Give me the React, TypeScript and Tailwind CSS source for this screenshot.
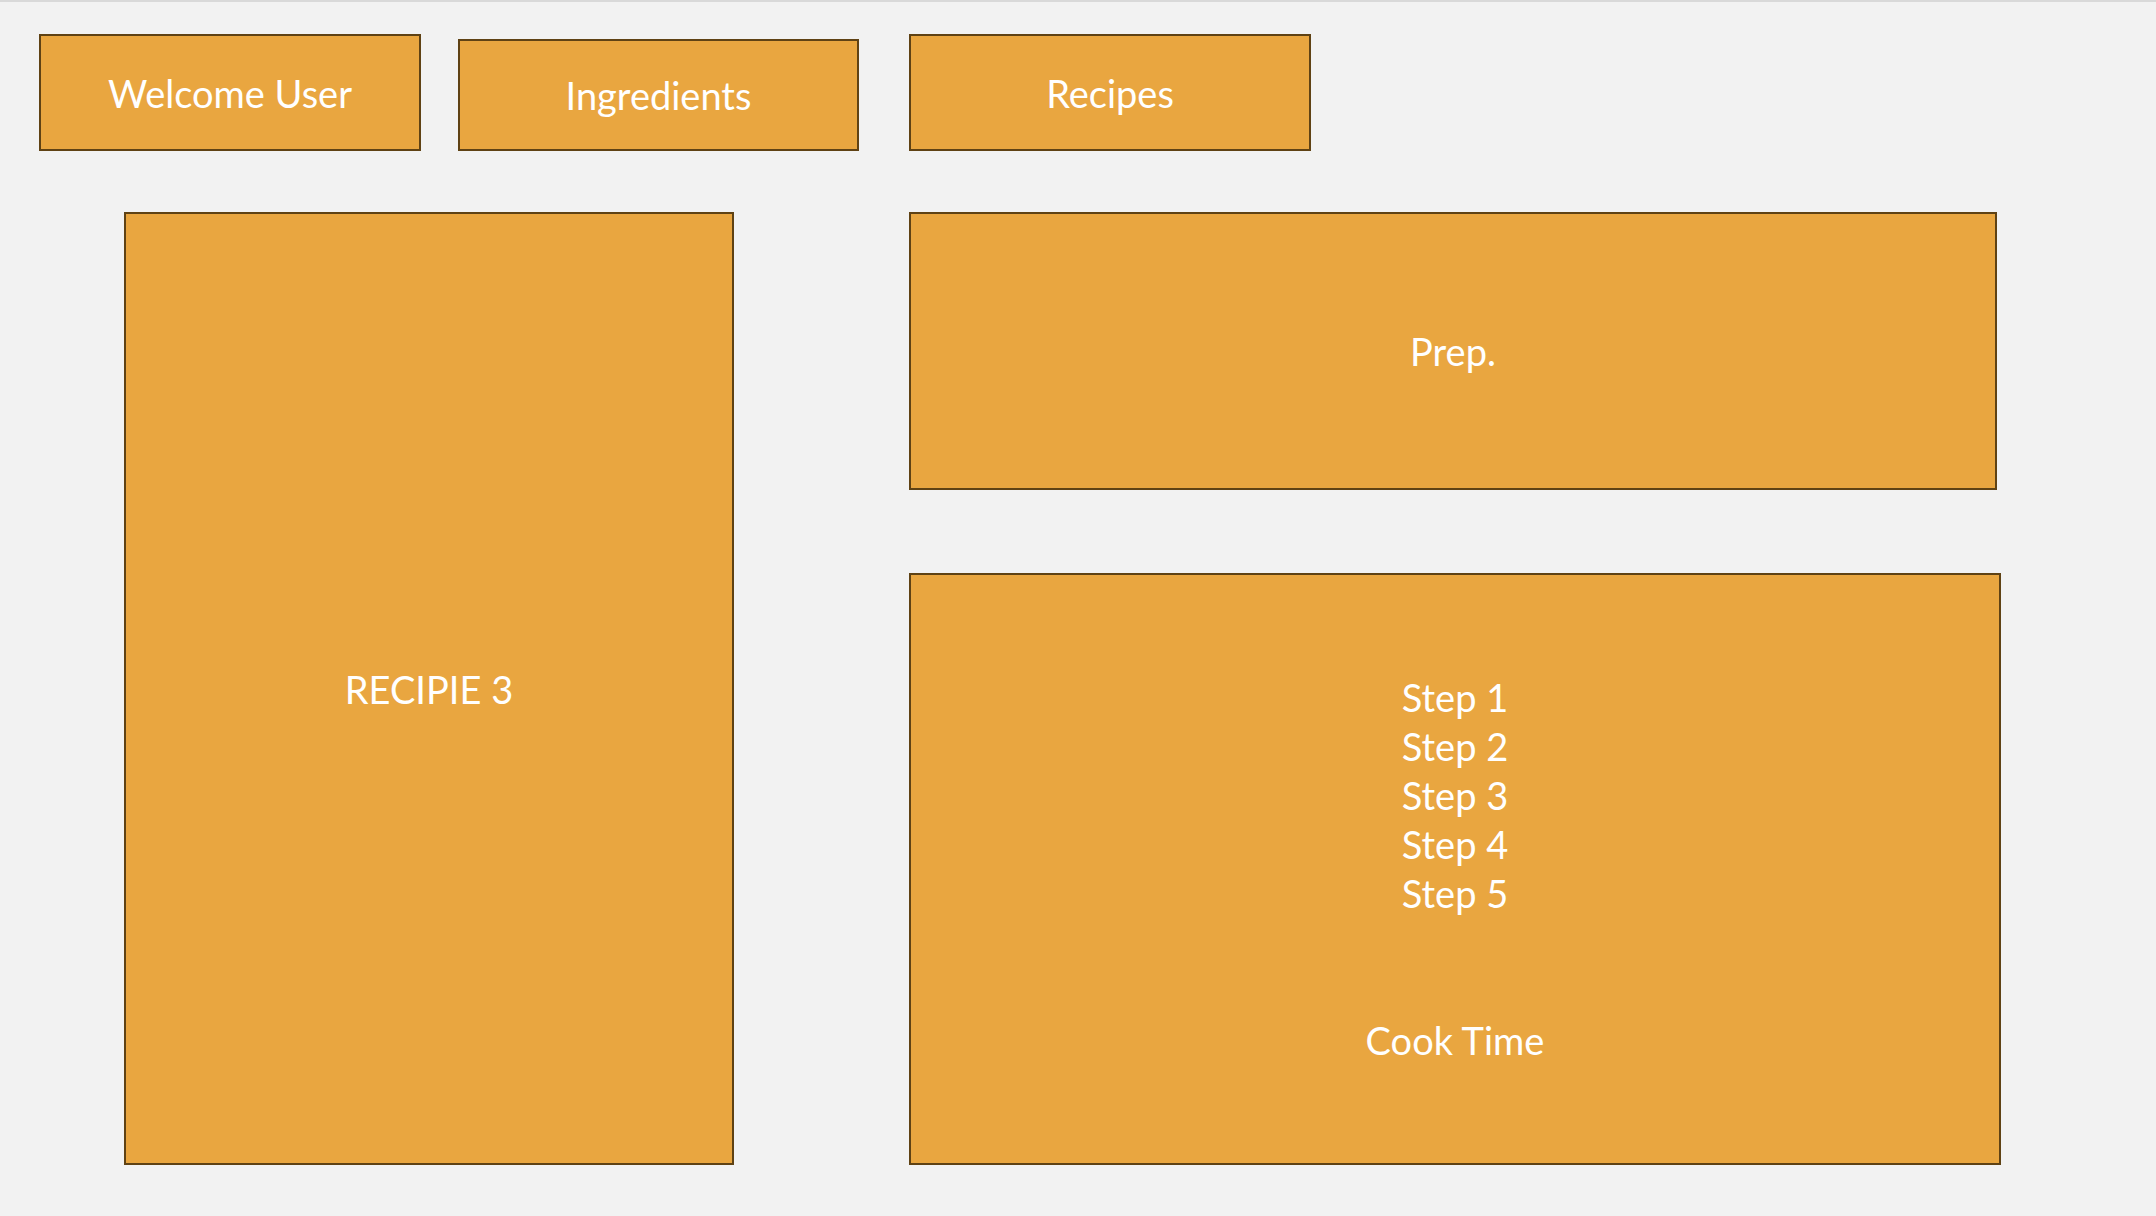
const box =
  "flex items-center justify-center bg-[#e9a640] border-2 border-[#5f4214] text-white text-[38px] leading-none";

const steps = ["Step 1", "Step 2", "Step 3", "Step 4", "Step 5"];

export default function App() {
  return (
    <div
      className="w-full min-h-[1216px] bg-[#f2f2f2] border-t-2 border-[#d9d9d9]"
      style={{ fontFamily: "Lato, 'Open Sans', sans-serif" }}
    >
      {/* top nav tiles */}
      <div className="flex items-end pl-[39px] pt-[32px]">
        <div className={`${box} w-[382px] h-[117px]`}>Welcome User</div>
        <div className={`${box} w-[401px] h-[112px] ml-[37px]`}>Ingredients</div>
        <div className={`${box} w-[402px] h-[117px] ml-[50px]`}>Recipes</div>
      </div>

      {/* recipe detail */}
      <div className="flex items-start pl-[124px] pt-[61px]">
        <div className={`${box} w-[610px] h-[953px]`}>RECIPIE 3</div>

        <div className="flex flex-col ml-[175px]">
          <div className={`${box} w-[1088px] h-[278px]`}>Prep.</div>
          <div className={`${box} flex-col w-[1092px] h-[592px] mt-[83px]`}>
            <div className="flex flex-col items-center leading-[49px]">
              {steps.map((s) => (
                <span key={s}>{s}</span>
              ))}
            </div>
            <div className="mt-[98px] leading-[49px]">Cook Time</div>
          </div>
        </div>
      </div>
    </div>
  );
}
